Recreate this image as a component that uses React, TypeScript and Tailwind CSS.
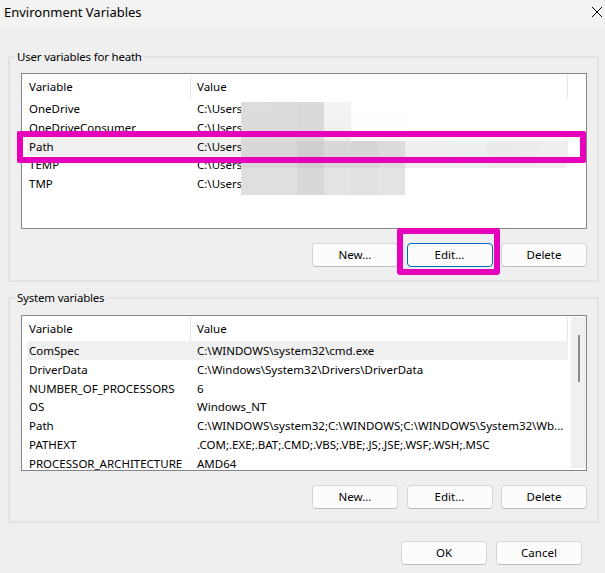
const F = "font-['Noto_Sans','Open_Sans',sans-serif]";

function Btn({ label, focus, className = "" }: { label: string; focus?: boolean; className?: string }) {
  return (
    <div
      className={
        "flex h-[24px] w-[86px] items-center justify-center rounded-[4px] border bg-[#fcfcfc] text-[11.5px] leading-none text-black " +
        (focus ? "border-[#0067c0] " : "border-[#d6d6d6] border-b-[#bdbdbd] ") +
        className
      }
    >
      {label}
    </div>
  );
}

function Row({ name, value, selected }: { name: string; value: string; selected?: boolean }) {
  return (
    <div className={"ml-[5px] flex h-[18.85px] w-[541px] shrink-0 items-center pt-[1px] " + (selected ? "bg-[#f0f0f0]" : "")}>
      <div className="w-[168px] shrink-0 pl-[2px] whitespace-nowrap">{name}</div>
      <div className="min-w-0 pl-[2px] whitespace-nowrap">{value}</div>
    </div>
  );
}

function Header() {
  return (
    <div className="flex h-[25px] w-[547px] shrink-0 items-center">
      <div className="h-full w-[168px] shrink-0 pt-[3px] pl-[7px]">
        <div className="flex h-[19px] items-center">Variable</div>
      </div>
      <div className="flex h-[24px] w-[378px] shrink-0 items-center border-x-1 border-[#e6e6e6] pl-[6px]">Value</div>
    </div>
  );
}

function Group({ label, top, children }: { label: string; top: string; children: React.ReactNode }) {
  return (
    <div className={"relative ml-2 h-[226px] w-[591px] rounded-[1px] border-2 border-[#e2e2e2] pl-[11px] " + top}>
      <div className="absolute -top-[9px] left-[5px] bg-[#efefef] px-[2px] text-[11.5px] leading-4 tracking-[-0.2px] text-black">{label}</div>
      {children}
    </div>
  );
}

const mosaic = [
  { h: "h-[12px]", cells: ["w-[28px] bg-[#dedcdc]", "w-[28px] bg-[#dddcdc]", "w-[27px] bg-[#dbdada]", "w-[27px] bg-[#f3f3f3]"] },
  { h: "h-[13px]", cells: ["w-[28px] bg-[#dcdcdb]", "w-[28px] bg-[#dcdbdb]", "w-[27px] bg-[#d9d9d9]", "w-[27px] bg-[#f1f1f1]", "w-[57px] bg-[#fdfdfd]"] },
  { h: "h-[14px]", cells: ["w-[28px] bg-[#dcdcdb]", "w-[28px] bg-[#dcdbdb]", "w-[27px] bg-[#d9d9d9]", "w-[27px] bg-[#efefef]", "w-[57px] bg-[#fdfdfd]", "w-[159px] bg-[#fcfcfc]"] },
  {
    h: "h-[27px]",
    cells: [
      "w-[28px] bg-[#d9d8d8]",
      "w-[28px] bg-[#d9d8d8]",
      "w-[27px] bg-[#d0cecf]",
      "w-[27px] bg-[#d8d8d8]",
      "w-[27px] bg-[#d6d4d4]",
      "w-[27px] bg-[#dbdbdb]",
      "w-[27px] bg-[#efefef]",
      "w-[27px] bg-[#eeeeee]",
      "w-[27px] bg-[#eef0ef]",
      "w-[27px] bg-[#ebebeb]",
      "w-[27px] bg-[#ececec]",
      "w-[27px] bg-[#efefef]",
    ],
  },
  {
    h: "h-[27px]",
    cells: [
      "w-[28px] bg-[#e0dfdf]",
      "w-[28px] bg-[#e0dfdf]",
      "w-[27px] bg-[#d9d8d8]",
      "w-[27px] bg-[#e3e3e3]",
      "w-[27px] bg-[#e2e1e1]",
      "w-[27px] bg-[#e3e3e3]",
    ],
  },
];

export default function App() {
  return (
    <div className={"relative h-[573px] w-[605px] overflow-hidden bg-[#efefef] text-[11.5px] leading-4 text-black " + F}>
      <div className="flex h-[26px] items-center justify-between bg-[#f3f3f1] pr-[3px] pb-[2px] pl-[4px] text-[13px]">
        <span>Environment Variables</span>
        <svg width="10" height="10" viewBox="0 0 10 10" className="text-black">
          <path d="M0 0L10 10M10 0L0 10" stroke="currentColor" strokeWidth="1" fill="none" />
        </svg>
      </div>

      <div className="mt-[30px]">
        <Group label="User variables for heath" top="pt-[15px]">
          <div className="relative h-[156px] w-[566px] overflow-hidden border border-[#85858c] bg-white">
            <Header />
            <Row name="OneDrive" value="C:\Users" />
            <Row name="OneDriveConsumer" value="C:\Users" />
            <Row name="Path" value="C:\Users" selected />
            <Row name="TEMP" value="C:\Users" />
            <Row name="TMP" value="C:\Users" />
            <div className="absolute top-[28px] left-[219px]">
              {mosaic.map((r, i) => (
                <div key={i} className={"flex " + r.h}>
                  {r.cells.map((c, j) => (
                    <div key={j} className={c} />
                  ))}
                </div>
              ))}
            </div>
          </div>
          <div className="mt-[14px] flex w-[566px] justify-end gap-[8.5px]">
            <Btn label="New..." />
            <Btn label="Edit..." focus />
            <Btn label="Delete" />
          </div>
        </Group>
      </div>

      <div className="mt-[15px]">
        <Group label="System variables" top="pt-[16px]">
          <div className="relative flex h-[156px] w-[566px] overflow-hidden border border-[#85858c] bg-white">
            <div className="flex w-[548px] shrink-0 flex-col">
              <Header />
              <Row name="ComSpec" value="C:\WINDOWS\system32\cmd.exe" selected />
              <Row name="DriverData" value="C:\Windows\System32\Drivers\DriverData" />
              <Row name="NUMBER_OF_PROCESSORS" value="6" />
              <Row name="OS" value="Windows_NT" />
              <Row name="Path" value="C:\WINDOWS\system32;C:\WINDOWS;C:\WINDOWS\System32\Wb..." />
              <Row name="PATHEXT" value=".COM;.EXE;.BAT;.CMD;.VBS;.VBE;.JS;.JSE;.WSF;.WSH;.MSC" />
              <Row name="PROCESSOR_ARCHITECTURE" value="AMD64" />
            </div>
            <div className="mt-[1px] mb-[2px] ml-[1px] flex w-[16px] justify-center bg-[#f0f0f0] pt-[18px]">
              <div className="h-[47px] w-[2px] bg-[#8a8a8a]" />
            </div>
          </div>
          <div className="mt-[14px] flex w-[566px] justify-end gap-[8.5px]">
            <Btn label="New..." />
            <Btn label="Edit..." />
            <Btn label="Delete" />
          </div>
        </Group>
      </div>

      <div className="mt-[18px] flex justify-end gap-[9px] pr-[23px]">
        <Btn label="OK" />
        <Btn label="Cancel" />
      </div>

      <div className="absolute top-[131px] left-[17px] h-[32px] w-[569px] rounded-[2px] border-[6px] border-[#e600bb]" />
      <div className="absolute top-[228px] left-[397px] h-[47px] w-[103px] rounded-[3px] border-[6px] border-[#e600bb]" />
    </div>
  );
}
